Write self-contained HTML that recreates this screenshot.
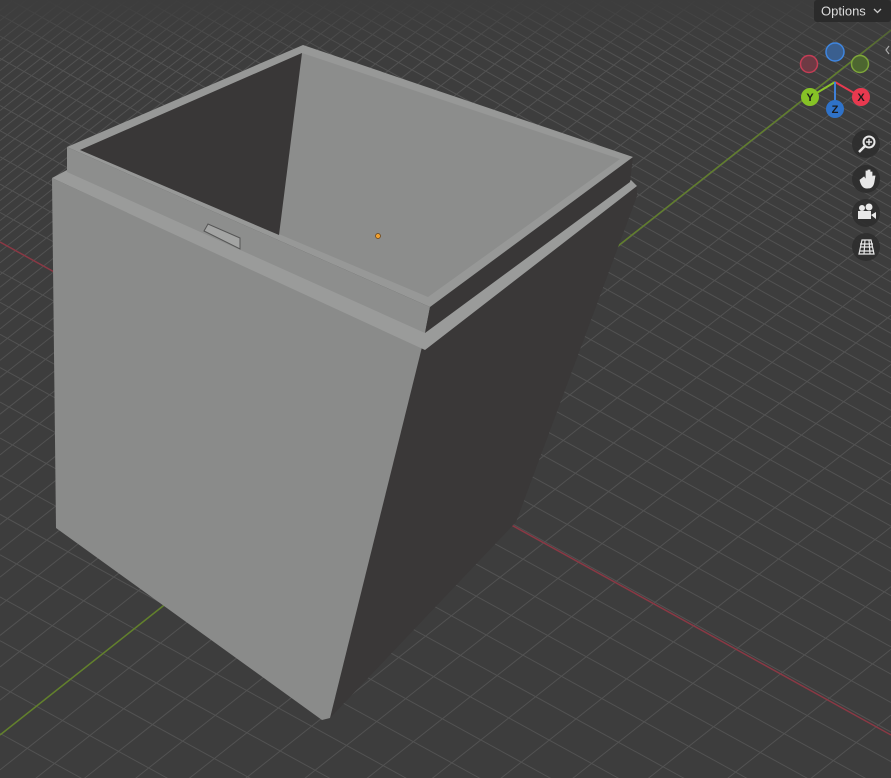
<!DOCTYPE html>
<html><head><meta charset="utf-8"><style>
html,body{margin:0;padding:0;background:#3d3d3d;overflow:hidden;width:891px;height:778px}
svg{display:block}
</style></head><body>
<svg id="s" width="891" height="778" viewBox="0 0 891 778" xmlns="http://www.w3.org/2000/svg">
<defs><linearGradient id="fd" x1="0" y1="0" x2="0" y2="1">
<stop offset="0" stop-color="#3d3d3d" stop-opacity="1"/><stop offset="0.4" stop-color="#3d3d3d" stop-opacity="0.5"/><stop offset="1" stop-color="#3d3d3d" stop-opacity="0"/></linearGradient></defs>
<rect width="891" height="778" fill="#3d3d3d"/>
<g id="grid" stroke="#525252" stroke-width="1"></g>
<line x1="0" y1="242" x2="891" y2="735" stroke="#8a3844" stroke-width="1.5"/>
<line x1="0" y1="735" x2="891" y2="30" stroke="#62802c" stroke-width="1.5"/>
<rect x="0" y="0" width="891" height="60" fill="url(#fd)"/>
<polygon points="422,345 637,186 637,196 516,522 330,718" fill="#3a3838"/>
<polygon points="52,178 422,347 330,718 322,720 56,528" fill="#8a8b8a"/>
<polygon points="52,178 67,170 425,331 631,180 637,186 425,350" fill="#9a9b9a"/>
<polygon points="67,147 430,307 425,333 67,172" fill="#8d8e8d"/>
<polygon points="430,307 633,157 630,182 425,333" fill="#393737"/>
<polygon points="67,147 303,45 633,157 430,307" fill="#979897"/>
<polygon points="80,150 302,53 620,159 428,297" fill="#8c8d8c"/>
<polygon points="80,150 302,53 279,235" fill="#393737"/>
<polygon points="204,231 208,224 240,238 240,249" fill="#a3a4a3" stroke="#555" stroke-width="1"/>
<circle cx="378" cy="236" r="2.5" fill="#f0a030" stroke="#6a4010" stroke-width="0.7"/>
<rect x="814" y="0" width="77" height="22" rx="3" fill="#2b2b2b"/>
<text x="821" y="15.5" font-family="Liberation Sans, sans-serif" font-size="13" fill="#dcdcdc">Options</text>
<path d="M874 9 l3.5 3.5 l3.5 -3.5" stroke="#ccc" stroke-width="1.3" fill="none"/>
<path d="M889 46 l-3 4 l3 4" stroke="#aaa" stroke-width="1.2" fill="none"/>
<circle cx="809" cy="64" r="8.5" fill="#6e3a44" stroke="#c43d55" stroke-width="1.5"/>
<circle cx="860" cy="64" r="8.5" fill="#4d6630" stroke="#7ea63a" stroke-width="1.5"/>
<circle cx="835" cy="52" r="9" fill="#3a5f8f" stroke="#3f86e0" stroke-width="1.5"/>
<line x1="835" y1="82" x2="810" y2="97" stroke="#8bc42a" stroke-width="2"/>
<line x1="835" y1="82" x2="861" y2="97" stroke="#e8394f" stroke-width="2"/>
<line x1="835" y1="82" x2="835" y2="108" stroke="#3f80d8" stroke-width="2"/>
<circle cx="810" cy="97" r="9" fill="#86c226"/>
<circle cx="861" cy="97" r="9" fill="#e8394f"/>
<circle cx="835" cy="109" r="9" fill="#2f72c8"/>
<g font-family="Liberation Sans, sans-serif" font-size="11" font-weight="bold" fill="#1a1a1a" text-anchor="middle">
<text x="810" y="101">Y</text><text x="861" y="101">X</text><text x="835" y="113">Z</text></g>
<g fill="#2e2e2e" opacity="0.9">
<circle cx="866" cy="144" r="14"/><circle cx="866" cy="179" r="14"/><circle cx="866" cy="213" r="14"/><circle cx="866" cy="247" r="14"/></g>
<g fill="#e8e8e8" stroke="#e8e8e8">
<circle cx="869" cy="142" r="5.5" fill="none" stroke-width="2"/>
<path d="M869 139v6M866 142h6" stroke-width="1.4"/>
<path d="M865 146 l-6 6" stroke-width="2.5"/>
<path d="M860 180 q2 9 8 8 q5 0 6-6 l1-6 l-2 0 l-1 4 l0-8 l-2 0 l0 7 l0-9 l-2 0 l0 9 l0-8 l-2 0 l0 9 l-2-3 z" stroke-width="0.8"/>
<circle cx="862" cy="208" r="3" stroke="none"/><circle cx="869" cy="207" r="3.5" stroke="none"/>
<rect x="858" y="211" width="13" height="8" stroke="none"/>
<path d="M871 215 l5 -3 v7 z" stroke="none"/>
<path d="M859 254 l3 -14 h9 l3 14 z M861 247 h12 M860 251 h14 M865 240 l-1 14 M869 240 l1 14 M860 244 h13" fill="none" stroke-width="1.2"/>
</g>
</svg>
<script>
var g=document.getElementById('grid'),h='';
function A(b){h+='<line x1="0" y1="'+b+'" x2="891" y2="'+(b+891*0.55)+'"/>';}
function B(b){h+='<line x1="0" y1="'+b+'" x2="891" y2="'+(b-891*0.79)+'"/>';}
var b=242;while(b<800){A(b);var ym=b+247;b+=10+0.04*ym;}
b=242;while(b>-520){var ym=b+247;b-=10+0.04*Math.max(ym,10);A(b);}
b=735;while(b<1500){B(b);var ym=b-237;b+=10+0.05*Math.max(ym,0);}
b=735;while(b>0){var ym=b-237;b-=10+0.05*Math.max(ym,0);B(b);}
g.innerHTML=h;
</script>
</body></html>
